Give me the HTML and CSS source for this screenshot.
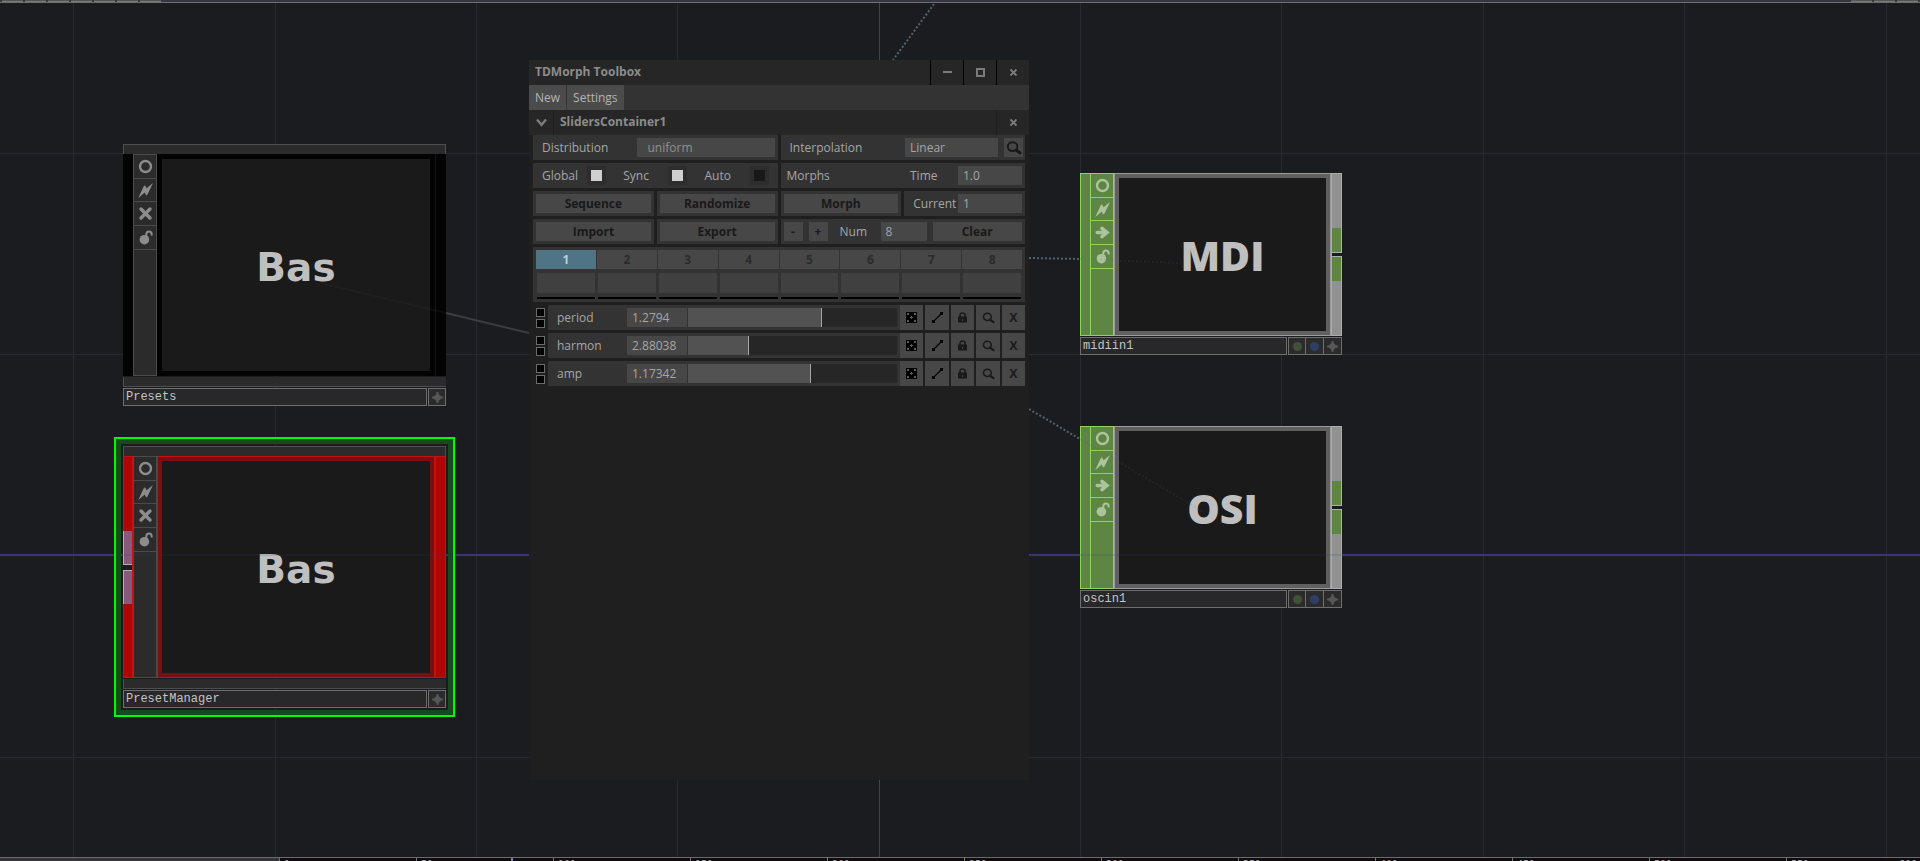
FILE: index.html
```html
<!DOCTYPE html>
<html lang="en">
<head>
<meta charset="utf-8">
<title>TDMorph Toolbox</title>
<link rel="stylesheet" href="styles.css">
</head>
<body>
<svg class="defs" aria-hidden="true">
  <symbol id="ring" viewBox="0 0 15 15"><circle cx="7.5" cy="7.5" r="5.5" fill="none" stroke="currentColor" stroke-width="2.4"/></symbol>
  <symbol id="bolt" viewBox="0 0 15 15"><path d="M15 0 L9.5 11.5 L8 12.5 L6.8 9.6 L.3 15 L5.6 3.6 L7 2.2 L8.6 5.2 Z" fill="currentColor"/></symbol>
  <symbol id="cross" viewBox="0 0 15 15"><path d="M3 3 L12 12 M12 3 L3 12" stroke="currentColor" stroke-width="3.4" stroke-linecap="round"/></symbol>
  <symbol id="arrow" viewBox="0 0 15 15"><path d="M2.2 7.5 H12 M7 3.3 L11.9 7.5 L7 11.7" fill="none" stroke="currentColor" stroke-width="3.6" stroke-linecap="round"/></symbol>
  <symbol id="unlock" viewBox="0 0 15 15"><circle cx="6.4" cy="9.7" r="4.8" fill="currentColor"/><path d="M8.3 6 V4.4 Q8.3 1.5 11 1.5 Q13.7 1.5 13.7 4.6 V5.6" fill="none" stroke="currentColor" stroke-width="2"/></symbol>
  <symbol id="plus" viewBox="0 0 15 15"><path d="M7.5 2 Q8 7 13 7.5 Q8 8 7.5 13 Q7 8 2 7.5 Q7 7 7.5 2 Z" fill="currentColor" stroke="currentColor" stroke-width="1.6"/></symbol>
  <symbol id="dot" viewBox="0 0 15 15"><circle cx="7.5" cy="7.5" r="4.6" fill="currentColor"/></symbol>
  <symbol id="dice" viewBox="0 0 11 11"><path d="M0 0H11V11H0Z" fill="#000"/><path d="M1 1H3V3H1Z M8 1H10V3H8Z M1 8H3V10H1Z M8 8H10V10H8Z M5 4H6V5H7V6H6V7H5V6H4V5H5Z" fill="#5a5a5a"/></symbol>
  <symbol id="curve" viewBox="0 0 11 11"><path d="M1.5 9.5 L9.5 1.5" stroke="#000" stroke-width="1.1"/><path d="M0 8H3V11H0Z M8 0H11V3H8Z" fill="#000"/></symbol>
  <symbol id="lock" viewBox="0 0 11 11"><path d="M1 4.5H10V10.5H1Z" fill="#191919"/><path d="M3 5V3.2Q3 1 5.5 1Q8 1 8 3.2V5" fill="none" stroke="#191919" stroke-width="1.5"/><path d="M5 7H6V9H5Z" fill="#444"/></symbol>
  <symbol id="search" viewBox="0 0 16 14"><ellipse cx="6.6" cy="5.6" rx="4.8" ry="4.4" fill="none" stroke="#191919" stroke-width="1.9"/><path d="M10 9 L14.2 12" stroke="#191919" stroke-width="2.8" stroke-linecap="round"/></symbol>
</svg>

<header class="topbar"><i></i><i></i><i></i><i></i><i></i><i></i><i></i><i class="end"></i><i></i><i></i></header>

<main class="network">
  <svg class="wires" aria-hidden="true">
    <g class="grid">
      <path d="M73.5 0V2000M275.5 0V2000M476.5 0V2000M677.5 0V2000M1080.5 0V2000M1281.5 0V2000M1483.5 0V2000M1684.5 0V2000M1886.5 0V2000"/>
      <path d="M0 150.5H4000M0 351.5H4000M0 754.5H4000"/>
    </g>
    <path class="axis" d="M879.5 0V2000"/>
    <path class="axis wide" d="M0 552H4000"/>
    <path class="wire" d="M446 310L529 330"/>
    <path class="dotted" d="M934 1L893 57M1029 255L1080 256M1029 406L1080 436"/>
  </svg>

  <section class="node comp presets">
    <div class="cap"></div>
    <div class="body">
      <div class="side"></div>
      <div class="flags">
        <button aria-label="Viewer"><svg><use href="#ring"/></svg></button>
        <button aria-label="Cook"><svg><use href="#bolt"/></svg></button>
        <button aria-label="Bypass"><svg><use href="#cross"/></svg></button>
        <button aria-label="Lock"><svg><use href="#unlock"/></svg></button>
      </div>
      <div class="viewer">Bas</div>
      <div class="side right"></div>
    </div>
    <div class="cap foot"></div>
    <div class="nameplate"><span>Presets</span><div class="tools"><button aria-label="Activate"><svg><use href="#plus"/></svg></button></div></div>
  </section>

  <div class="selection">
    <section class="node comp red">
      <div class="cap"></div>
      <div class="body">
        <div class="side"><b class="port up"></b><b class="port down"></b></div>
        <div class="flags">
          <button aria-label="Viewer"><svg><use href="#ring"/></svg></button>
          <button aria-label="Cook"><svg><use href="#bolt"/></svg></button>
          <button aria-label="Bypass"><svg><use href="#cross"/></svg></button>
          <button aria-label="Lock"><svg><use href="#unlock"/></svg></button>
        </div>
        <div class="viewer">Bas</div>
        <div class="side right"></div>
      </div>
      <div class="cap foot"></div>
      <div class="nameplate"><span>PresetManager</span><div class="tools"><button aria-label="Activate"><svg><use href="#plus"/></svg></button></div></div>
    </section>
  </div>

  <section class="node chop midi">
    <div class="body">
      <div class="side"></div>
      <div class="flags">
        <button aria-label="Viewer"><svg><use href="#ring"/></svg></button>
        <button aria-label="Cook"><svg><use href="#bolt"/></svg></button>
        <button aria-label="Export"><svg><use href="#arrow"/></svg></button>
        <button aria-label="Lock"><svg><use href="#unlock"/></svg></button>
      </div>
      <div class="viewer">MDI</div>
      <div class="side right"><b class="port up"></b><b class="port down"></b></div>
    </div>
    <div class="nameplate"><span>midiin1</span><div class="tools"><button class="green" aria-label="Display"><svg><use href="#dot"/></svg></button><button class="blue" aria-label="Render"><svg><use href="#dot"/></svg></button><button aria-label="Activate"><svg><use href="#plus"/></svg></button></div></div>
  </section>

  <section class="node chop osc">
    <div class="body">
      <div class="side"></div>
      <div class="flags">
        <button aria-label="Viewer"><svg><use href="#ring"/></svg></button>
        <button aria-label="Cook"><svg><use href="#bolt"/></svg></button>
        <button aria-label="Export"><svg><use href="#arrow"/></svg></button>
        <button aria-label="Lock"><svg><use href="#unlock"/></svg></button>
      </div>
      <div class="viewer">OSI</div>
      <div class="side right"><b class="port up"></b><b class="port down"></b></div>
    </div>
    <div class="nameplate"><span>oscin1</span><div class="tools"><button class="green" aria-label="Display"><svg><use href="#dot"/></svg></button><button class="blue" aria-label="Render"><svg><use href="#dot"/></svg></button><button aria-label="Activate"><svg><use href="#plus"/></svg></button></div></div>
  </section>

  <svg class="wires over" aria-hidden="true">
    <path class="axis wide" d="M123 552H446M1080 552H1342"/>
    <path class="wire" d="M325 281L446 310"/>
    <path class="dotted" d="M1080 256L1178 260M1080 436L1202 508"/>
  </svg>

  <section class="window">
    <header class="titlebar">
      <h1>TDMorph Toolbox</h1>
      <button aria-label="Minimize"><svg viewBox="0 0 9 9"><path d="M0 4H9" stroke-width="2"/></svg></button>
      <button aria-label="Maximize"><svg viewBox="0 0 9 9"><path d="M1 1H8V8H1Z" stroke-width="2"/></svg></button>
      <button aria-label="Close"><svg viewBox="0 0 9 9"><path d="M1.5 1.5L7.5 7.5M7.5 1.5L1.5 7.5" stroke-width="1.8"/></svg></button>
    </header>
    <nav class="menu"><button>New</button><button>Settings</button></nav>
    <header class="titlebar sub">
      <button class="fold" aria-label="Collapse"><svg viewBox="0 0 11 9"><path d="M1 1.5L5.5 6.8L10 1.5" stroke-width="2.4"/></svg></button>
      <h2>SlidersContainer1</h2>
      <button aria-label="Remove container"><svg viewBox="0 0 9 9"><path d="M1.5 1.5L7.5 7.5M7.5 1.5L1.5 7.5" stroke-width="1.8"/></svg></button>
    </header>

    <div class="controls">
      <div class="box half spread">
        <label for="dist">Distribution</label>
        <select id="dist" class="field dist"><option>uniform</option></select>
      </div>
      <div class="box half interp">
        <label for="interp">Interpolation</label>
        <select id="interp" class="field"><option>Linear</option></select>
        <button class="key square" aria-label="Browse interpolation"><svg class="lens"><use href="#search"/></svg></button>
      </div>

      <div class="box half checks">
        <label><span>Global</span><input type="checkbox" checked></label>
        <label><span>Sync</span><input type="checkbox" checked></label>
        <label><span>Auto</span><input type="checkbox"></label>
      </div>
      <div class="box half morphs">
        <span>Morphs</span>
        <label for="time">Time</label>
        <input id="time" class="field" type="text" value="1.0">
      </div>

      <div class="box"><button class="key">Sequence</button></div>
      <div class="box"><button class="key">Randomize</button></div>
      <div class="box"><button class="key">Morph</button></div>
      <div class="box current"><label for="current">Current</label><input id="current" class="field" type="text" value="1"></div>

      <div class="box"><button class="key">Import</button></div>
      <div class="box"><button class="key">Export</button></div>
      <div class="box half count">
        <button class="key square">-</button>
        <button class="key square">+</button>
        <label for="num">Num</label>
        <input id="num" class="field" type="text" value="8">
        <button class="key">Clear</button>
      </div>

      <div class="slots">
        <button class="on">1</button><button>2</button><button>3</button><button>4</button><button>5</button><button>6</button><button>7</button><button>8</button>
        <i></i><i></i><i></i><i></i><i></i><i></i><i></i><i></i>
      </div>
    </div>

    <div class="param">
      <div class="pins"><input type="checkbox" aria-label="period pin A"><input type="checkbox" aria-label="period pin B"></div>
      <div class="box">
        <label for="period">period</label>
        <input class="field" type="text" value="1.2794" aria-label="period value">
        <input id="period" type="range" max="100" value="64" style="--v:64%">
      </div>
      <div class="actions">
        <button aria-label="Randomize"><svg><use href="#dice"/></svg></button><button aria-label="Curve"><svg><use href="#curve"/></svg></button><button aria-label="Lock"><svg><use href="#lock"/></svg></button><button aria-label="Find"><svg class="glass"><use href="#search"/></svg></button><button>X</button>
      </div>
    </div>
    <div class="param">
      <div class="pins"><input type="checkbox" aria-label="harmon pin A"><input type="checkbox" aria-label="harmon pin B"></div>
      <div class="box">
        <label for="harmon">harmon</label>
        <input class="field" type="text" value="2.88038" aria-label="harmon value">
        <input id="harmon" type="range" max="100" value="29" style="--v:29%">
      </div>
      <div class="actions">
        <button aria-label="Randomize"><svg><use href="#dice"/></svg></button><button aria-label="Curve"><svg><use href="#curve"/></svg></button><button aria-label="Lock"><svg><use href="#lock"/></svg></button><button aria-label="Find"><svg class="glass"><use href="#search"/></svg></button><button>X</button>
      </div>
    </div>
    <div class="param">
      <div class="pins"><input type="checkbox" aria-label="amp pin A"><input type="checkbox" aria-label="amp pin B"></div>
      <div class="box">
        <label for="amp">amp</label>
        <input class="field" type="text" value="1.17342" aria-label="amp value">
        <input id="amp" type="range" max="200" value="117" style="--v:58.5%">
      </div>
      <div class="actions">
        <button aria-label="Randomize"><svg><use href="#dice"/></svg></button><button aria-label="Curve"><svg><use href="#curve"/></svg></button><button aria-label="Lock"><svg><use href="#lock"/></svg></button><button aria-label="Find"><svg class="glass"><use href="#search"/></svg></button><button>X</button>
      </div>
    </div>
  </section>
</main>

<footer class="timeline">
  <div class="range"></div>
  <div class="ticks"><span>1</span><span>51</span><span>101</span><span>151</span><span>201</span><span>251</span><span>301</span><span>351</span><span>401</span><span>451</span><span>501</span><span class="end">551<em>600</em></span></div>
  <b class="playhead"></b>
</footer>
</body>
</html>
```
FILE: styles.css
```css
* { box-sizing: border-box; }

body {
  margin: 0;
  height: 100vh;
  display: flex;
  flex-direction: column;
  overflow: hidden;
  background: #1b1c20;
  color: #a6a6a6;
  font: 12px/16px "Open Sans", "Noto Sans", sans-serif;
}

button, input, select {
  font: inherit;
  color: inherit;
  border: 0;
  margin: 0;
  padding: 0;
  border-radius: 0;
  appearance: none;
  min-width: 0;
}

.defs { position: absolute; width: 0; height: 0; }

/* bars at the edges of the screen */
.topbar {
  flex: none;
  display: flex;
  gap: 2px;
  height: 3px;
  padding: 0 2px;
  background: #35363f;
  border-bottom: 1px solid #707070;
}
.topbar i { width: 21px; height: 2px; background: #555; border-bottom: 1px solid #777; }
.topbar .end { margin-left: auto; }

.timeline {
  flex: none;
  position: relative;
  display: flex;
  height: 4px;
  overflow: hidden;
  background: #0e0a0d;
  border-top: 1px solid #6b6b6b;
}
.range { flex: 0 0 279px; background: #35343a; }
.ticks { flex: 1; display: flex; min-width: 0; }
.ticks span {
  flex: 0 0 137px;
  height: 16px;
  padding-left: 4px;
  border-left: 1px solid #777;
  font: 10px/14px "DejaVu Sans Mono", monospace;
}
.ticks .end { flex: 1; display: flex; justify-content: space-between; padding-right: 3px; }
.ticks em { font-style: normal; }
.playhead { position: absolute; left: 511px; top: 0; width: 2px; height: 4px; background: #7c82ad; }

/* network canvas */
.network { flex: 1; position: relative; overflow: hidden; }
.wires { position: absolute; inset: 0; width: 100%; height: 100%; fill: none; }
.grid { stroke: #292a31; }
.axis { stroke: #413c72; }
.wide { stroke-width: 2; stroke: #39376b; }
.wire { stroke: #3c3d40; stroke-width: 2; }
.dotted { stroke: #536170; stroke-width: 2; stroke-dasharray: 2 2; }
.over { pointer-events: none; opacity: .15; }

.node { position: absolute; width: 323px; }
.presets { left: 123px; top: 141px; }
.midi { left: 1080px; top: 170px; width: 262px; }
.osc { left: 1080px; top: 423px; width: 262px; }

.selection {
  position: absolute;
  left: 114px;
  top: 434px;
  padding: 7px;
  border: 2px solid #00fb00;
  outline: 5px solid #154a1a;
  outline-offset: -7px;
}
.selection .node { position: static; }

.cap { height: 10px; background: #2b2b2b; border: 1px solid #4d4d52; border-bottom: 0; }
.foot { margin-top: 1px; border-top: 0; border-right: 0; border-bottom: 1px solid #4d4d52; }
.body { display: flex; height: 222px; }
.chop .body { height: 163px; }
.side { position: relative; flex: 0 0 10px; background: #030303; }
.right { flex-basis: 11px; border-left: 1px solid #151515; }
.flags { flex: 0 0 24px; background: #2b2b2b; border: 1px solid #4b4b4b; color: #8c8c8c; }
.flags button {
  display: grid;
  place-items: center;
  width: 100%;
  height: 24px;
  background: none;
  border-bottom: 1px solid #4b4b4b;
}
.flags button:nth-child(2) { height: 23px; }
.flags svg { width: 15px; height: 15px; }
.viewer {
  flex: 1;
  display: grid;
  place-items: center;
  padding-top: 6px;
  background: #1a1a1a;
  border: 5px solid #030303;
  color: #bfbfbf;
  font: bold 39px/48px "DejaVu Sans", sans-serif;
}

.red .side { background: #b00505; border: 1px solid #bd1414; }
.red .viewer { border-color: #7a0e10; outline: 1px solid #c31414; outline-offset: -1px; }
.red .port { background: #8a587b; }

.chop .side, .chop .flags { background: #5f8545; border: 1px solid #8cd45f; color: #acc49e; }
.chop .side { border-right: 0; }
.chop .flags button { border-color: #8cd45f; }
.chop .viewer {
  padding-top: 0;
  border-color: #606060;
  outline: 1px solid #9b9b9b;
  outline-offset: -1px;
  font: 800 41px/48px "Open Sans", "Noto Sans", sans-serif;
}
.chop .right { background: #919191; border: 1px solid #adadad; }
.chop .port { background: #5f8545; }

.port { position: absolute; left: -1px; right: 0; height: 34px; border: 0 solid #b0b0b0; }
.port.up { top: 74px; border-width: 0 0 1px 1px; }
.port.down { top: 113px; border-width: 1px 0 0 1px; }
.red .port.up { box-shadow: 0 5px 0 #1b1c20; }
.chop .port { left: 0; right: -1px; height: 25px; }
.chop .port.up { top: 54px; border-width: 0 1px 1px 0; box-shadow: 0 3px 0 #1b1c20; }
.chop .port.down { top: 82px; border-width: 1px 1px 0 0; }

.nameplate { display: flex; gap: 1px; height: 18px; margin-top: 1px; }
.nameplate span {
  flex: 1;
  padding-left: 2px;
  background: #28282a;
  border: 1px solid #6e6e6e;
  color: #c4c4c4;
  font: 12px/16px "Liberation Mono", monospace;
}
.tools { display: flex; border: 1px solid #6e6e6e; }
.tools button { display: grid; place-items: center; width: 16px; background: #2b2b2b; color: #575757; }
.tools button + button { width: 18px; border-left: 1px solid #6e6e6e; }
.tools svg { width: 15px; height: 15px; }
.tools .green { color: #42503a; }
.tools .blue { color: #2f3f63; }

/* toolbox window */
.window {
  position: absolute;
  left: 529px;
  top: 57px;
  width: 500px;
  min-height: 720px;
  background: #1f1f1f;
}
.titlebar { display: flex; height: 25px; background: #262626; color: #8c8c8c; }
.titlebar h1, .titlebar h2 { flex: 1; margin: 0; padding-left: 6px; font-size: 12px; font-weight: bold; line-height: 24px; }
.titlebar button { display: grid; place-items: center; width: 33px; background: none; border-left: 1px solid #000; }
.titlebar svg { width: 9px; height: 9px; fill: none; stroke: #7b7b7b; }
.sub button { border-left-color: #1f1f1f; }
.sub .fold { width: 25px; border: 0; border-right: 1px solid #1f1f1f; }
.sub .fold svg { width: 11px; }

.menu { display: flex; gap: 1px; height: 25px; background: #333; }
.menu button { padding: 0 6px; background: #4b4b4b; color: #b4b4b4; }

.controls { display: grid; grid-template-columns: repeat(4, 1fr); gap: 3px; padding: 0 4px; }
.box { display: flex; align-items: center; min-width: 0; height: 25px; padding: 3px; background: #333; }
.half { grid-column: span 2; }
.field { height: 19px; padding: 0 5px; background: #474747; line-height: 19px; }
.key { flex: 1; height: 19px; background: #474747; color: #191919; font-weight: bold; line-height: 18px; text-align: center; }
.square { flex: 0 0 19px; display: grid; place-items: center; }
.lens { width: 16px; height: 14px; }

.spread { justify-content: space-between; padding-left: 9px; }
.dist { width: 138px; padding-left: 11px; color: #909090; }
.interp { padding-left: 9px; padding-right: 2px; gap: 6px; }
.interp label { flex: 1; }
.interp .field { width: 93px; }
.checks { justify-content: space-between; padding: 0 13px 0 9px; }
.checks label { display: flex; align-items: center; justify-content: space-between; width: 60px; }
.checks input { width: 19px; height: 19px; margin-right: -4px; border: 4px solid #2d2d2d; background: #181818; }
.checks input:checked { background: #cfcfcf; }
.morphs { padding-left: 6px; }
.morphs span { flex: 1; }
.morphs label { width: 48px; }
.morphs .field { width: 64px; }
.current { justify-content: space-between; padding-left: 9px; }
.current .field { width: 64px; }
.count { gap: 6px; }
.count label { width: 41px; padding-left: 6px; }
.count .field { width: 46px; }

.slots {
  grid-column: 1 / -1;
  display: grid;
  grid-template-columns: repeat(8, 1fr);
  grid-template-rows: 19px 26px;
  column-gap: 1px;
  row-gap: 4px;
  height: 55px;
  padding: 3px;
  background: #333;
}
.slots button { background: #474747; color: #2b2b2b; font-weight: bold; line-height: 18px; }
.slots .on { background: #4f7485; color: #b4cfdc; }
.slots i { margin: 0 1px; border-bottom: 2px solid #000; background: linear-gradient(#404040 20px, #333 20px); }

.param { display: flex; height: 25px; margin: 3px 4px 0; }
.pins { display: flex; flex-direction: column; gap: 2px; padding: 3px 3px 0; }
.pins input { width: 9px; height: 9px; background: #000; border: 1px solid #6b6b6b; }
.param .box { flex: 1; gap: 1px; padding-left: 9px; }
.param label { width: 69px; }
.param .field { width: 60px; }
input[type="range"] {
  flex: 1;
  height: 19px;
  background: linear-gradient(90deg, #525252 var(--v), #262626 var(--v));
}
input[type="range"]::-webkit-slider-thumb { appearance: none; width: 1px; height: 19px; background: #a6a6a6; }
.actions { display: flex; gap: 2px; }
.actions button { display: grid; place-items: center; width: 23px; background: #474747; color: #191919; font-weight: bold; }
.actions button:nth-child(2), .actions button:nth-child(4) { width: 24px; }
.actions svg { width: 11px; height: 11px; }
.actions .glass { width: 13px; height: 12px; }
```
